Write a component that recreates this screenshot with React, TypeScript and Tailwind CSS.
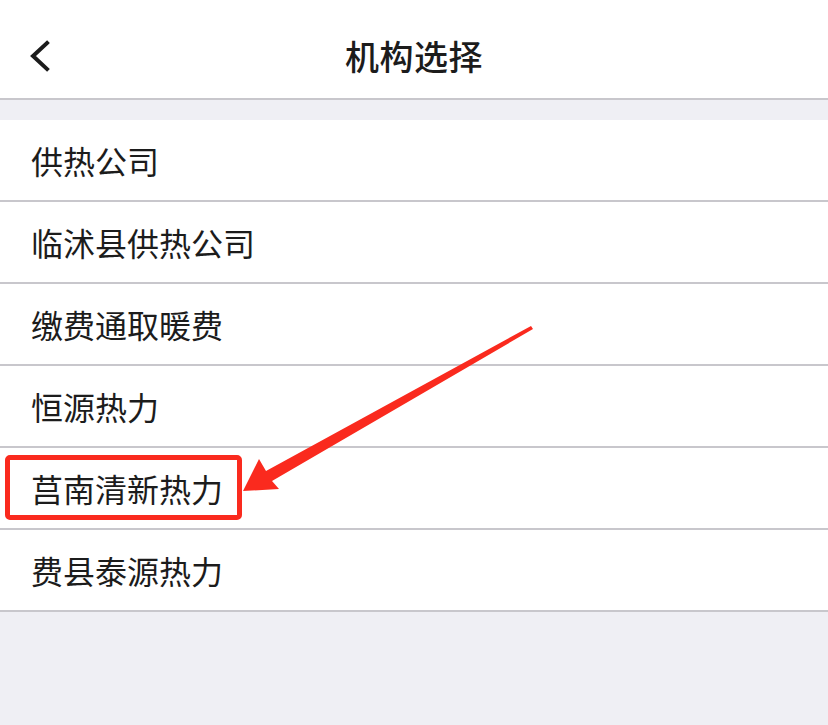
import React from "react";

const orgs = [
  "供热公司",
  "临沭县供热公司",
  "缴费通取暖费",
  "恒源热力",
  "莒南清新热力",
  "费县泰源热力",
];

const App: React.FC = () => {
  return (
    <div
      className="relative min-h-[725px] w-[828px] bg-[#efeff4] text-[#1c1c1c]"
      style={{ fontFamily: '"Noto Sans CJK SC", "Noto Sans", sans-serif' }}
    >
      {/* 顶部导航 */}
      <div className="bg-white border-b-2 border-[#c8c7cc] h-[100px] pt-[14px]">
        <div className="relative flex items-center justify-center h-[84px]">
          <button className="absolute left-[28px] top-[24px] w-[24px] h-[36px] flex items-center justify-center">
            <svg width="24" height="36" viewBox="0 0 24 36" fill="none">
              <path
                d="M19 5 L5 18 L19 31"
                stroke="#1c1c1c"
                strokeWidth="4"
                strokeLinecap="square"
                strokeLinejoin="miter"
              />
            </svg>
          </button>
          <h1 className="text-[34px] leading-none font-medium tracking-[0.5px]">机构选择</h1>
        </div>
      </div>

      {/* 机构列表 */}
      <div className="mt-[20px] bg-white">
        {orgs.map((name) => (
          <div
            key={name}
            className="h-[82px] flex items-center pl-[31px] border-b-2 border-[#c8c7cc] text-[32px] leading-none"
          >
            {name}
          </div>
        ))}
      </div>

      {/* 标注 */}
      <div className="absolute left-[5px] top-[455px] w-[237px] h-[65px] border-[5px] border-[#fa2a1e] rounded-[5px]" />
      <svg
        className="absolute left-0 top-0 pointer-events-none"
        width="828"
        height="725"
        viewBox="0 0 828 725"
      >
        <polygon
          points="531,326 533,329 272,481 279,489 243,491 259,459 266,471"
          fill="#fa2a1e"
        />
      </svg>
    </div>
  );
};

export default App;
